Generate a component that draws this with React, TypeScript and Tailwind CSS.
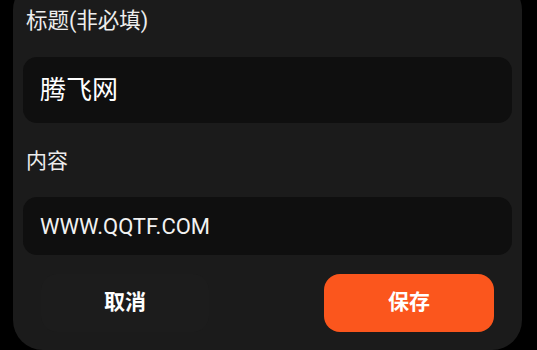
import React from 'react';

const font = { fontFamily: 'Roboto, "Noto Sans CJK SC", sans-serif' };

export default function App() {
  return (
    <div className="h-[350px] w-[537px] overflow-hidden bg-black pl-[13px] pr-[15px]" style={font}>
      <div className="-mt-[20px] flex flex-col rounded-[30px] bg-[#1b1b1b] px-[10px] pb-[18px] pt-[25px]">
        <label className="pl-[3px] text-[21.5px] leading-[32px] text-[#ededed]">标题(非必填)</label>
        <div className="mt-[20px] flex h-[66px] items-center rounded-[14px] bg-[#0f0f0f] pl-[17px]">
          <span className="text-[26px] text-white">腾飞网</span>
        </div>

        <label className="mt-[22px] pl-[3px] text-[21px] leading-[32px] text-[#ededed]">内容</label>
        <div className="mt-[20px] flex h-[58px] items-center rounded-[14px] bg-[#0f0f0f] pl-[17px]">
          <span className="text-[22px] text-[#f2f2f2]">WWW.QQTF.COM</span>
        </div>

        <div className="mt-[19px] flex justify-between px-[18px]">
          <button className="h-[58px] w-[168px] rounded-[16px] bg-[#1c1c1c] text-[21px] font-bold text-white">
            取消
          </button>
          <button className="h-[58px] w-[170px] rounded-[16px] bg-[#fb561d] text-[21px] font-bold text-white">
            保存
          </button>
        </div>
      </div>
    </div>
  );
}
